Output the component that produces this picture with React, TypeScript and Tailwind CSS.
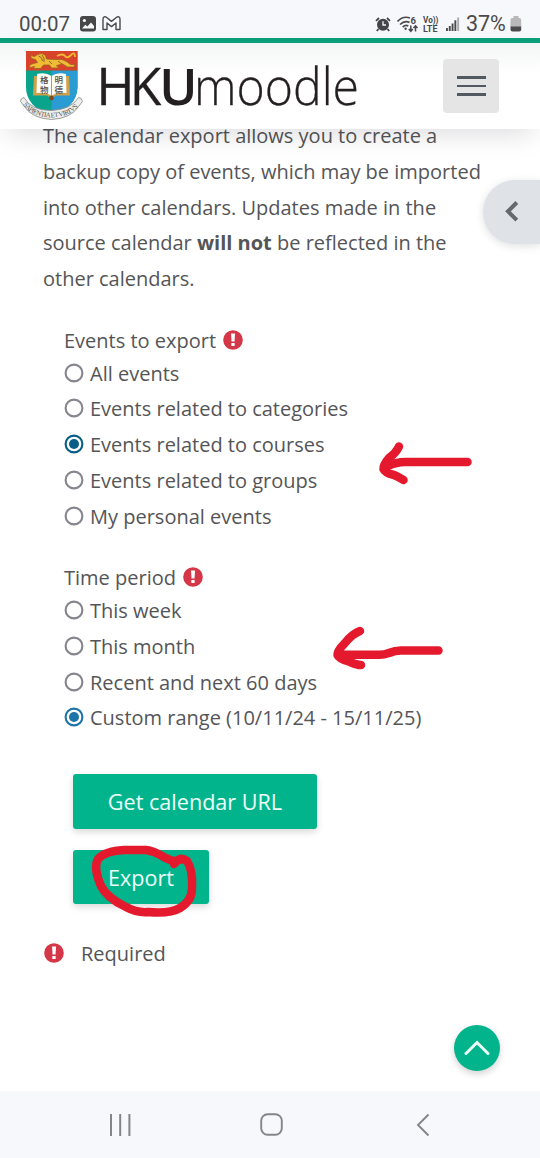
import React from 'react';

const body = "font-['Open_Sans','Noto_Sans',sans-serif]";

function StatusBar() {
  return (
    <div className="flex h-[38px] shrink-0 items-start bg-[#f7f8fb] pt-[12px] text-[#4a4a4c]">
      <span className="ml-[19px] w-[60px] font-['Roboto',sans-serif] text-[20.5px] leading-[24px]">00:07</span>
      <svg className="mt-[4px] ml-px" width="16" height="16" viewBox="0 0 16 16">
        <rect width="16" height="15.5" rx="3" fill="#47474a" />
        <circle cx="4.4" cy="4.5" r="1.6" fill="#f7f8fb" />
        <path d="M2 12.5 5.3 8.7 7.4 10.6 11 6.5 14 10v2.5Z" fill="#f7f8fb" />
      </svg>
      <svg className="mt-[4px] ml-[6px]" width="19" height="15" viewBox="0 0 19 15" fill="none" stroke="#4a4a4c" strokeWidth="1.4" strokeLinejoin="round">
        <path d="M1 13.5V3.2C1 .8 3 .3 4.4 1.3L9.5 5.4 14.6 1.3C16 .3 18 .8 18 3.2V13.5H14V7L9.5 10.6 5 7V13.5Z" />
      </svg>
      <svg className="mt-[5px] ml-[254px]" width="16" height="15" viewBox="0 0 16 15">
        <circle cx="8" cy="7.8" r="6" fill="#454548" />
        <path d="M1 3.8 4 1M15 3.8 12 1M3.5 12 1.8 14M12.5 12 14.2 14" stroke="#454548" strokeWidth="1.8" />
        <path d="M8 4.2V8H11" stroke="#f7f8fb" strokeWidth="1.3" fill="none" />
      </svg>
      <svg className="mt-[4px] ml-[6px]" width="23" height="17" viewBox="0 0 23 17" fill="none" stroke="#4a4a4c" strokeWidth="1.7">
        <path d="M.5 5.5Q6-.5 13 2M3 8.5Q7.5 4.2 12.5 6.4M5.7 11Q8.5 8.5 11.3 10" />
        <circle cx="8.6" cy="12.8" r="1.2" fill="#4a4a4c" stroke="none" />
        <path d="M13.8 9.5V15M11.8 13 13.8 15.3 15.8 13M18.5 15.5V10M16.5 12 18.5 9.8 20.5 12" strokeWidth="1.5" />
        <text x="13.6" y="7.5" fontSize="9.5" fontWeight="700" fontFamily="Roboto" fill="#4a4a4c" stroke="none">6</text>
      </svg>
      <svg className="mt-[4px] ml-[2px]" width="18" height="17" viewBox="0 0 18 17" fill="#4a4a4c" fontFamily="Roboto" fontSize="8.5" fontWeight="700">
        <text x="1" y="7" textLength="15.5" lengthAdjust="spacingAndGlyphs">Vo))</text>
        <text x="1" y="15.8" fontSize="9" textLength="14.5" lengthAdjust="spacingAndGlyphs">LTE</text>
      </svg>
      <svg className="mt-[4px] ml-[6px]" width="14" height="16" viewBox="0 0 14 16">
        <path d="M0 12h1.9v3H0zM2.8 10h1.9v5H2.8zM5.6 7.5h1.9V15H5.6zM8.4 4.2h1.9V15H8.4z" fill="#4a4a4c" />
        <path d="M11.2 1.5h1.9V15h-1.9z" fill="#aaaaad" />
      </svg>
      <span className="ml-[6px] w-[42px] font-['Roboto',sans-serif] text-[21.5px] leading-[24px] tracking-[-0.1px]">37%</span>
      <svg className="mt-[4px] ml-[2px]" width="12" height="16" viewBox="0 0 12 16">
        <path d="M3.5 0h5v2H9.5Q11.2 2 11.2 4v7H.5V4Q.5 2 2.2 2H3.5Z" fill="#b8b8bb" />
        <path d="M.5 10.5h10.7v3q0 2-2 2H2.5q-2 0-2-2Z" fill="#4a4a4c" />
      </svg>
    </div>
  );
}

function Crest() {
  return (
    <svg width="64" height="72" viewBox="0 0 64 72">
      <path d="M6 1H57.5V37Q57 57 31.5 66 6 57 6 37Z" fill="#0aa38c" />
      <path d="M31.5 20.5H57.5V37Q57 57 31.5 66Z" fill="#2a9bd3" />
      <path d="M6 1H57.5V20.5H6Z" fill="#d8432b" />
      <path d="M9.5 16.5q0-2.500 4-3l4-1-2-3-4-1-1-3 4 1 3-2q5-2.500 8 1l1 3.500 9 .5q7-1 11 2l4 3h4v2.500h-7l-5-3-6 1.500 2 2.500h-7l-2-3h-6l-3 3.500h-7l1-2-4 1Z" fill="#f0bb35" stroke="#9c6122" strokeWidth=".8" />
      <path d="M37 6q6-3 8 0t6-1 4 2" stroke="#f0bb35" strokeWidth="1.8" fill="none" />
      <path d="M18.5 6q4 1 4 5M22 5q3 3 2 7M29 11l3 3M38 11l4 3" stroke="#94611f" fill="none" />
      <path d="M14 26h35l1 19.5H35.5l-4 4-4-4H13Z" fill="#cfa14a" />
      <path d="M17 24q9-2 14.5 2 5.5-4 14.5-2l.5 19q-10-1-15 3-5-4-15-3Z" fill="#fffdf5" />
      <path d="M31.5 26V46" stroke="#b19c6c" strokeWidth="1" />
      <g fontFamily="Noto Sans CJK TC" fontSize="8.5" fontWeight="500" fill="#4d4b46">
        <text x="20" y="33.3">格</text>
        <text x="34.5" y="33.3">明</text>
        <text x="20" y="42.5">物</text>
        <text x="34.5" y="42.5">德</text>
      </g>
      <circle cx="31.5" cy="48" r="2.4" fill="#854a24" />
      <path d="M4 47.5Q.5 48 .5 51.5L4 56Q12 68.5 31.5 69.5 51 68.5 59 56l3.5-4.5q-.5-4-4-4-7 12-27 13Q11 60.5 4 47.5Z" fill="#eeeeec" stroke="#92928e" strokeWidth=".9" />
      <path id="motto" d="M3 54.5Q12 67 31.5 67.5 51 67 60 54.5" fill="none" />
      <text fontSize="7" fontFamily="Liberation Serif" fill="#555552">
        <textPath href="#motto" textLength="62">SAPIENTIA ET VIRTVS</textPath>
      </text>
    </svg>
  );
}

function Header() {
  return (
    <header className="relative z-10 flex h-[91px] shrink-0 items-start border-t-[5px] border-[#0a9f7a] bg-linear-to-b from-[#f4f5f5] to-white to-35% shadow-[0_12px_28px_-8px_rgba(0,10,30,0.15)]">
      <div className="mt-[7px] ml-[20px]"><Crest /></div>
      <svg className="mt-[2px] ml-[12px] overflow-visible" width="266" height="82" viewBox="96 45 266 82" fill="#231f20" stroke="#231f20" fontFamily="Open Sans" fontSize="51.5">
        <text y="105">
          <tspan x="96.5" fontWeight="400" strokeWidth=".5">H</tspan>
          <tspan x="129.8" fontWeight="500" strokeWidth=".3">K</tspan>
          <tspan x="159.2" fontWeight="600" strokeWidth="0">U</tspan>
        </text>
        <text x="194" y="105" fontWeight="300" strokeWidth=".3" textLength="165" lengthAdjust="spacingAndGlyphs">moodle</text>
      </svg>
      <button aria-label="Menu" className="mt-[16px] ml-[81px] flex h-[54px] w-[56px] flex-col items-center justify-center gap-[6px] rounded-[4px] bg-[#e5e5e5]">
        <span className="h-[2.5px] w-[29px] bg-[#525960]" />
        <span className="h-[2.5px] w-[29px] bg-[#525960]" />
        <span className="h-[2.5px] w-[29px] bg-[#525960]" />
      </button>
    </header>
  );
}

function RequiredIcon() {
  return (
    <svg className="-mt-[2px]" width="20" height="20" viewBox="0 0 20 20">
      <circle cx="10" cy="10" r="9.8" fill="#d43748" />
      <path d="M8 3.5h4l-.5 8H8.5Z" fill="#fff" />
      <rect x="8.3" y="12.9" width="3.4" height="3.1" rx=".4" fill="#fff" />
    </svg>
  );
}

function Radio({ label, checked, bright }: { label: string; checked?: boolean; bright?: boolean }) {
  const color = checked ? (bright ? '#1d74a8' : '#075e86') : '#85858f';
  return (
    <label className="flex h-[35.8px] items-center">
      <svg className="-mt-[2px]" width="20" height="20" viewBox="0 0 20 20" fill="none">
        <circle cx="10" cy="10" r="8.4" stroke={color} strokeWidth="2.1" />
        {checked && <circle cx="10" cy="10" r="5" fill={color} />}
      </svg>
      <span className="ml-[6px] whitespace-nowrap">{label}</span>
    </label>
  );
}

function Marks() {
  return (
    <svg className="pointer-events-none absolute top-0 left-0 z-20" width="540" height="1158" fill="none" stroke="#e5192d" strokeWidth="8.5" strokeLinecap="round" strokeLinejoin="round">
      <path d="M467.5 461.9H405Q396 462 388 466M399 446.5Q396 453 389 458 383 465 383.5 469 385 473 394 475 399 477 403.5 480" />
      <path d="M438.5 650.5H403Q396 650 389 653 383 655 378 654.7H343M360 631Q352 634 345 643 337 651 337.5 655 339 659 350 662 357 665 361 665" />
      <path d="M174 864Q180 856 187 861 193 870 192 888 192 901 180 908 170 914 148 912 137 913 126 907 107 898 101 886 93 868 98 859 105 851 124 850H146Q154 851 162 856 169 860 174 861" />
    </svg>
  );
}

export default function App() {
  return (
    <div className={`relative flex h-[1158px] w-[540px] flex-col overflow-hidden bg-white text-[#555557] ${body}`}>
      <StatusBar />
      <Header />
      <main className="relative flex-1 text-[20px]">
        <p className="-mt-[11px] ml-[43px] text-[20px] leading-[35.8px] whitespace-nowrap">
          The calendar export allows you to create a<br />
          backup copy of events, which may be imported<br />
          into other calendars. Updates made in the<br />
          source calendar <strong className="font-bold">will not</strong> be reflected in the<br />
          other calendars.
        </p>
        <button aria-label="Open drawer" className="absolute top-[51px] right-0 flex h-[64px] w-[57px] items-center rounded-l-full bg-[#dfe2e7] pl-[22px] shadow-[0_2px_8px_rgba(0,0,0,0.13)]">
          <svg className="-mt-[2px]" width="14" height="21" viewBox="0 0 14 21" fill="none" stroke="#66686b" strokeWidth="4"><path d="M11.8 1.5 3 10.3l8.8 8.8" /></svg>
        </button>
        <section className="mt-[28.8px] ml-[64px]">
          <div className="flex h-[30px] items-center gap-[7px]"><span>Events to export</span><RequiredIcon /></div>
          <Radio label="All events" />
          <Radio label="Events related to categories" />
          <Radio label="Events related to courses" checked />
          <Radio label="Events related to groups" />
          <Radio label="My personal events" />
        </section>
        <section className="mt-[27.7px] ml-[64px]">
          <div className="flex h-[30.6px] items-center gap-[7px]"><span>Time period</span><RequiredIcon /></div>
          <Radio label="This week" />
          <Radio label="This month" />
          <Radio label="Recent and next 60 days" />
          <Radio label="Custom range (10/11/24 - 15/11/25)" checked bright />
        </section>
        <div className="mt-[38px] ml-[73px] flex flex-col items-start gap-[21px] text-[21.6px] text-[#edfff9]">
          <button className="h-[54.5px] w-[244px] rounded-[3px] bg-[#02b48c] pt-[2px] shadow-[0_3px_7px_rgba(0,0,0,0.15)]">Get calendar URL</button>
          <button className="h-[54.5px] w-[136px] rounded-[3px] bg-[#02b48c] pt-[2px] shadow-[0_3px_7px_rgba(0,0,0,0.15)]">Export</button>
        </div>
        <div className="mt-[34.3px] ml-[44px] flex h-[30px] items-center gap-[17px]"><RequiredIcon /><span>Required</span></div>
        <button aria-label="Back to top" className="absolute top-[896px] right-[40px] flex h-[46px] w-[46px] items-center justify-center rounded-full bg-[#02b48c] shadow-[0_3px_7px_rgba(0,0,0,0.18)]">
          <svg className="-mt-[1px]" width="26" height="16" viewBox="0 0 26 16" fill="none" stroke="#edfff9" strokeWidth="3" strokeLinecap="round"><path d="M2 13.5 13 2.5l11 11" /></svg>
        </button>
      </main>
      <nav className="flex h-[67px] shrink-0 items-center bg-[#f7f8fb] text-[#858589]">
        <svg className="ml-[109px]" width="23" height="22" stroke="currentColor" strokeWidth="2"><path d="M2 0v22M11.2 0v22M20.4 0v22" /></svg>
        <svg className="ml-[128px]" width="24" height="24" fill="none" stroke="currentColor" strokeWidth="1.9"><rect x="1.2" y="1.2" width="20.6" height="20.6" rx="6.5" /></svg>
        <svg className="ml-[132px]" width="14" height="24" fill="none" stroke="currentColor" strokeWidth="1.9"><path d="M12.5 1.5 2 12l10.5 10.5" /></svg>
      </nav>
      <Marks />
    </div>
  );
}
